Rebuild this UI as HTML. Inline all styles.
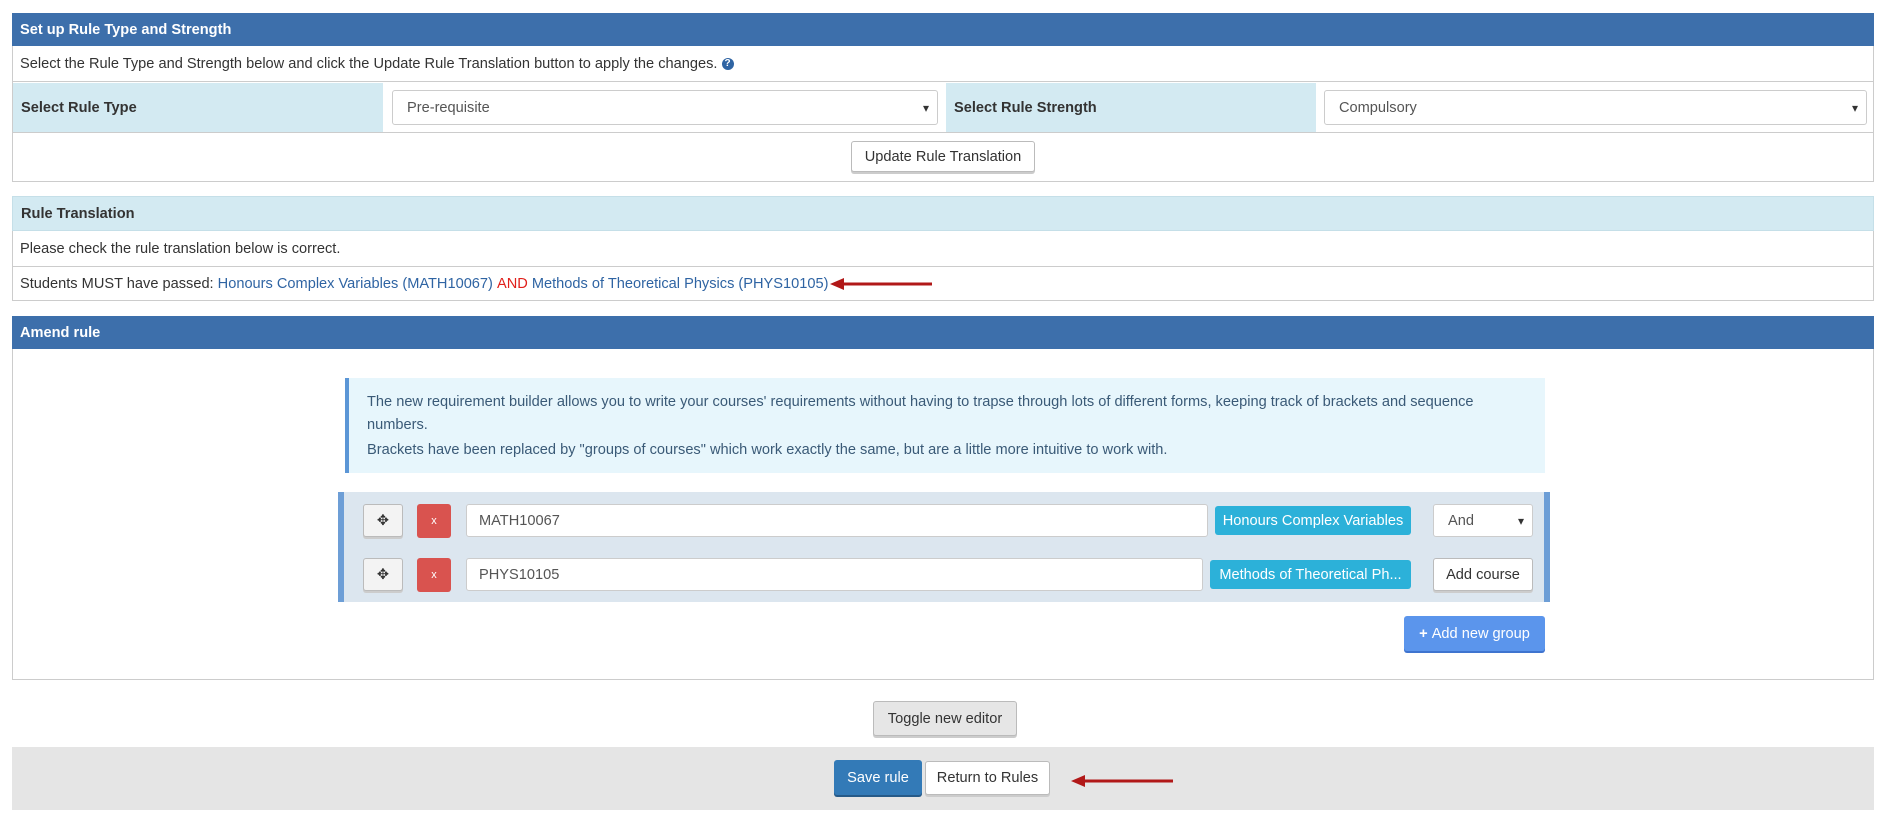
<!DOCTYPE html>
<html><head><meta charset="utf-8">
<style>
*{box-sizing:border-box;margin:0;padding:0}
body{width:1886px;height:826px;background:#fff;font-family:"Liberation Sans",sans-serif;font-size:14.6px;color:#333;position:relative;overflow:hidden}
.a{position:absolute}
.hd{background:#3d6fab;color:#fff;font-weight:bold;padding-left:8px;display:flex;align-items:center}
.bx{border:1px solid #ccc;border-top:none}
.lb{background:#d3eaf2;font-weight:bold;display:flex;align-items:center;padding-left:8px}
.inp{border:1px solid #ccc;border-radius:3px;background:#fff;display:flex;align-items:center;padding-left:14px;color:#555}
.sel:after{content:"▾";position:absolute;right:8px;font-size:12px;color:#333}
.btn{border:1px solid #bbb;border-radius:3px;background:#fff;display:flex;align-items:center;justify-content:center;color:#333;box-shadow:0 2px 0 #ccc}
.row{display:flex;align-items:center;padding-left:8px}
a{color:#2f64a3;text-decoration:none}
</style></head><body>

<div class="a hd" style="left:12px;top:13px;width:1862px;height:33px">Set up Rule Type and Strength</div>
<div class="a bx" style="left:12px;top:46px;width:1862px;height:136px"></div>
<div class="a row" style="left:12px;top:46px;width:1862px;height:36px;border-bottom:1px solid #ccc">Select the Rule Type and Strength below and click the Update Rule Translation button to apply the changes.&nbsp;<span style="display:inline-block;width:12px;height:12px;border-radius:6px;background:#2f64a3;color:#fff;font-size:10px;font-weight:bold;text-align:center;line-height:12px">?</span></div>
<div class="a lb" style="left:13px;top:83px;width:370px;height:49px">Select Rule Type</div>
<div class="a inp sel" style="left:392px;top:90px;width:546px;height:35px">Pre-requisite</div>
<div class="a lb" style="left:946px;top:83px;width:370px;height:49px">Select Rule Strength</div>
<div class="a inp sel" style="left:1324px;top:90px;width:543px;height:35px">Compulsory</div>
<div class="a" style="left:12px;top:132px;width:1862px;height:1px;background:#ccc"></div>
<div class="a btn" style="left:851px;top:141px;width:184px;height:31px">Update Rule Translation</div>

<div class="a lb" style="left:12px;top:196px;width:1862px;height:35px;border:1px solid #c5dfe8">Rule Translation</div>
<div class="a bx" style="left:12px;top:231px;width:1862px;height:70px"></div>
<div class="a row" style="left:12px;top:231px;width:1862px;height:36px;border-bottom:1px solid #ccc">Please check the rule translation below is correct.</div>
<div class="a row" style="left:12px;top:267px;width:1862px;height:34px">Students MUST have passed:&nbsp;<a>Honours Complex Variables (MATH10067)</a>&nbsp;<span style="color:#e0201b">AND</span>&nbsp;<a>Methods of Theoretical Physics (PHYS10105)</a></div>
<svg class="a" style="left:828px;top:276px" width="108" height="16"><line x1="12" y1="8" x2="104" y2="8" stroke="#b11818" stroke-width="3"/><polygon points="2,8 16,2 16,14" fill="#b11818"/></svg>

<div class="a hd" style="left:12px;top:316px;width:1862px;height:33px">Amend rule</div>
<div class="a bx" style="left:12px;top:349px;width:1862px;height:331px"></div>
<div class="a" style="left:345px;top:378px;width:1200px;height:95px;background:#e7f6fc;border-left:4px solid #5b96d6;padding:13px 50px 0 18px;line-height:23px;color:#3a5a77">The new requirement builder allows you to write your courses' requirements without having to trapse through lots of different forms, keeping track of brackets and sequence numbers.<div style="margin-top:2px">Brackets have been replaced by "groups of courses" which work exactly the same, but are a little more intuitive to work with.</div></div>
<div class="a" style="left:338px;top:492px;width:1212px;height:110px;background:#dce6ef;border-left:6px solid #6d9ed6;border-right:6px solid #6d9ed6"></div>
<div class="a btn" style="left:363px;top:504px;width:40px;height:33px;background:#f3f3f3">✥</div>
<div class="a" style="left:417px;top:504px;width:34px;height:34px;background:#d9534f;border-radius:3px;color:#fff;font-size:11px;display:flex;align-items:center;justify-content:center">x</div>
<div class="a inp" style="left:466px;top:504px;width:742px;height:33px;padding-left:12px">MATH10067</div>
<div class="a" style="left:1215px;top:506px;width:196px;height:29px;background:#2cb1d9;border-radius:3px;color:#fff;display:flex;align-items:center;justify-content:center">Honours Complex Variables</div>
<div class="a inp sel" style="left:1433px;top:504px;width:100px;height:33px">And</div>
<div class="a btn" style="left:363px;top:558px;width:40px;height:33px;background:#f3f3f3">✥</div>
<div class="a" style="left:417px;top:558px;width:34px;height:34px;background:#d9534f;border-radius:3px;color:#fff;font-size:11px;display:flex;align-items:center;justify-content:center">x</div>
<div class="a inp" style="left:466px;top:558px;width:737px;height:33px;padding-left:12px">PHYS10105</div>
<div class="a" style="left:1210px;top:560px;width:201px;height:29px;background:#2cb1d9;border-radius:3px;color:#fff;display:flex;align-items:center;justify-content:center">Methods of Theoretical Ph...</div>
<div class="a btn" style="left:1433px;top:558px;width:100px;height:33px">Add course</div>
<div class="a" style="left:1404px;top:616px;width:141px;height:35px;background:#5b95ec;border-radius:3px;color:#fff;display:flex;align-items:center;justify-content:center;box-shadow:0 2px 0 #3f74cf"><b>+</b>&nbsp;Add new group</div>

<div class="a btn" style="left:873px;top:701px;width:144px;height:35px;background:#e6e6e6;border-color:#bbb">Toggle new editor</div>

<div class="a" style="left:12px;top:747px;width:1862px;height:63px;background:#e5e5e5"></div>
<div class="a" style="left:834px;top:760px;width:88px;height:35px;background:#337ab7;border-radius:3px;color:#fff;display:flex;align-items:center;justify-content:center;box-shadow:0 2px 0 #265a88">Save rule</div>
<div class="a btn" style="left:925px;top:761px;width:125px;height:34px">Return to Rules</div>
<svg class="a" style="left:1069px;top:773px" width="108" height="16"><line x1="12" y1="8" x2="104" y2="8" stroke="#b11818" stroke-width="3"/><polygon points="2,8 16,2 16,14" fill="#b11818"/></svg>
</body></html>
